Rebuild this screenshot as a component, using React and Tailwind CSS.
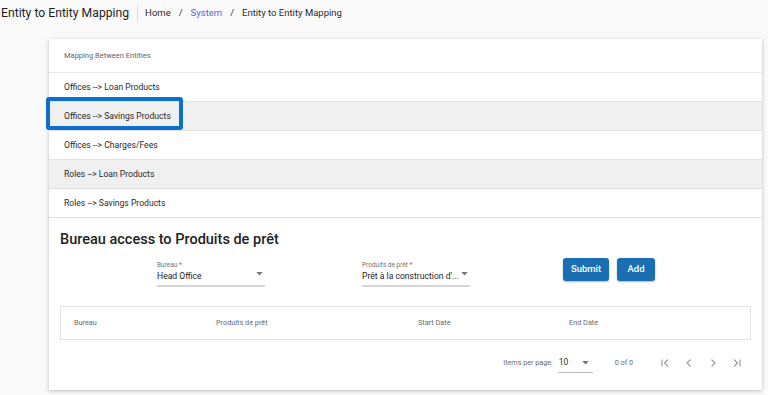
import React from 'react';

const rows = [
  { label: 'Offices --> Loan Products', shaded: false },
  { label: 'Offices --> Savings Products', shaded: true, focused: true },
  { label: 'Offices --> Charges/Fees', shaded: false },
  { label: 'Roles --> Loan Products', shaded: true },
  { label: 'Roles --> Savings Products', shaded: false },
];

const Caret = () => (
  <svg width="7" height="4" viewBox="0 0 8 5" className="text-[#757575]">
    <polygon points="0,0 8,0 4,4.5" fill="currentColor" />
  </svg>
);

const SelectField = ({ label, value, width }) => (
  <div className={`flex flex-col ${width}`}>
    <span className="text-[6.5px] leading-[9px] text-[#757575]">{label}</span>
    <div className="flex items-center justify-between border-b-[2px] border-[#d6d6d6] pb-[2px]">
      <span className="text-[8.6px] leading-[13px] text-[#222] whitespace-nowrap">{value}</span>
      <span className="mr-[2px] -mt-[5px]"><Caret /></span>
    </div>
  </div>
);

const PagerIcon = ({ d }) => (
  <svg width="12" height="12" viewBox="0 0 12 12" fill="none" stroke="#9e9e9e" strokeWidth="1.2">
    <path d={d} />
  </svg>
);

export default function App() {
  return (
    <div
      className="w-[768px] h-[395px] overflow-hidden bg-[#fafafa] text-[#333]"
      style={{ fontFamily: 'Roboto, "Liberation Sans", sans-serif' }}
    >
      <div className="flex items-center h-[26px]">
        <h1 className="text-[12.2px] text-[#1f1f1f] pl-[1px]">Entity to Entity Mapping</h1>
        <div className="w-px h-[17px] bg-[#ddd] ml-[8px] mr-[7px]" />
        <nav className="flex items-center gap-[8px] text-[9.5px] text-[#2a2a2a]">
          <span>Home</span>
          <span>/</span>
          <span className="text-[#4f63f0]">System</span>
          <span>/</span>
          <span>Entity to Entity Mapping</span>
        </nav>
      </div>

      <div className="ml-[49px] mt-[13px] w-[713px] bg-white shadow-[0_1px_4px_rgba(0,0,0,0.25)] pb-[4px]">
        <div className="h-[34px] flex items-center px-[15px] border-b border-[#e6e6e6] text-[7.5px] text-[#666]">
          Mapping Between Entities
        </div>
        {rows.map((r) => (
          <div
            key={r.label}
            className={`relative h-[29px] flex items-center px-[15px] border-b border-[#e2e2e2] text-[8.6px] text-[#2a2a2a] ${r.shaded ? 'bg-[#f0f0f0]' : 'bg-white'}`}
          >
            {r.label}
            {r.focused && (
              <div className="absolute left-[-3px] top-[-5px] w-[137px] h-[33px] border-[4px] border-[#0b6fd1] rounded-[3px]" />
            )}
          </div>
        ))}

        <div className="px-[11px]">
          <h2 className="text-[14.5px] font-medium text-[#222] mt-[12px] leading-[20px]">
            Bureau access to Produits de prêt
          </h2>

          <div className="flex items-start mt-[11px] h-[30px]">
            <div className="ml-[97px]">
              <SelectField label="Bureau *" value="Head Office" width="w-[108px]" />
            </div>
            <div className="ml-[97px]">
              <SelectField label="Produits de prêt *" value="Prêt à la construction d'..." width="w-[108px]" />
            </div>
            <div className="ml-[93px] flex gap-[8px] mt-[-3px]">
              <button className="h-[23px] w-[46px] rounded-[3px] bg-[#1a6fb3] text-white text-[9.5px] font-medium shadow-[0_1px_2px_rgba(0,0,0,0.3)]">
                Submit
              </button>
              <button className="h-[23px] w-[38px] rounded-[3px] bg-[#1a6fb3] text-white text-[9.5px] font-medium shadow-[0_1px_2px_rgba(0,0,0,0.3)]">
                Add
              </button>
            </div>
          </div>

          <div className="mt-[15px] h-[34px] border border-[#e3e3e3] flex items-center text-[7.3px] text-[#6a6a6a]">
            <span className="ml-[13px] w-[142px]">Bureau</span>
            <span className="w-[202px]">Produits de prêt</span>
            <span className="w-[151px]">Start Date</span>
            <span>End Date</span>
          </div>

          <div className="flex items-center justify-end h-[46px] text-[7.2px] text-[#6a6a6a] pr-[8px]">
            <span>Items per page:</span>
            <div className="ml-[5px] w-[35px] flex items-center justify-between border-b border-[#bdbdbd] pb-[3px] mt-[3px]">
              <span className="text-[8.5px] text-[#333] pl-[1px]">10</span>
              <span className="mr-[4px]"><Caret /></span>
            </div>
            <span className="ml-[22px]">0 of 0</span>
            <div className="ml-[26px] flex gap-[12px]">
              <PagerIcon d="M3 2.5v7M9 2.5L5.5 6 9 9.5" />
              <PagerIcon d="M7.5 2.5L4 6l3.5 3.5" />
              <PagerIcon d="M4.5 2.5L8 6 4.5 9.5" />
              <PagerIcon d="M3 2.5L6.5 6 3 9.5M9 2.5v7" />
            </div>
          </div>
        </div>
      </div>
    </div>
  );
}
